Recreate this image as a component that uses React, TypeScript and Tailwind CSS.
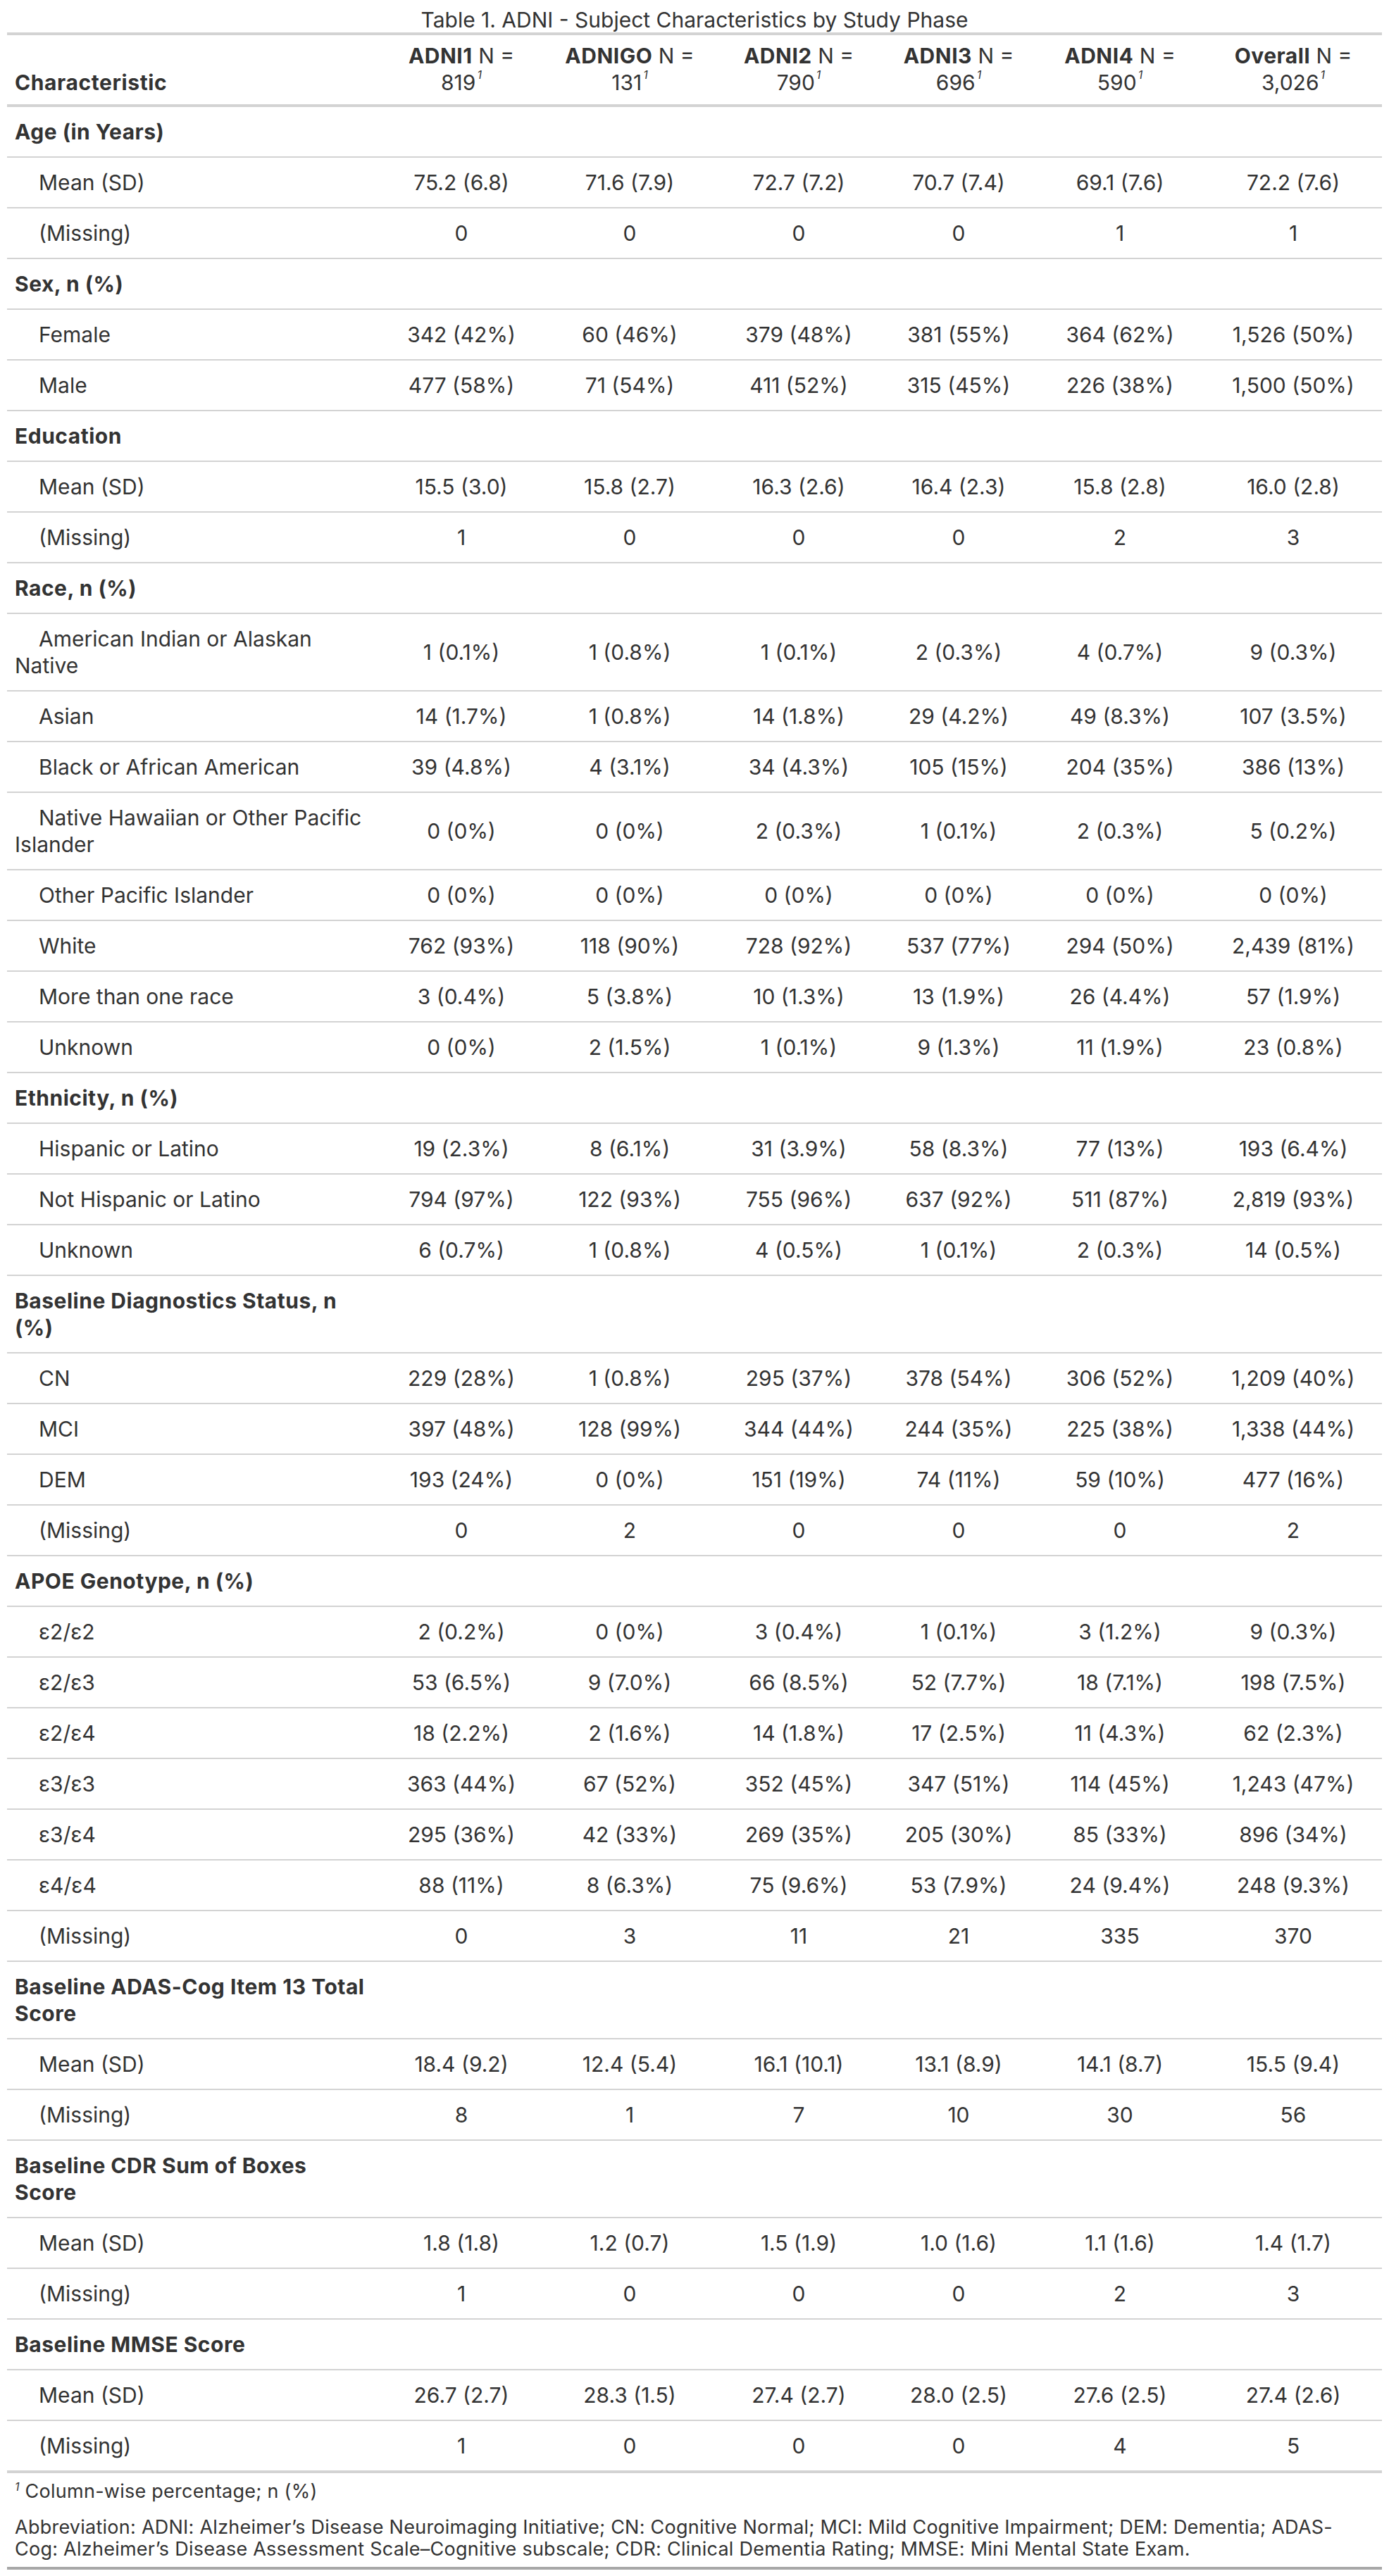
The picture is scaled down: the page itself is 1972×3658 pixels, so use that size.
import React from "react";

type Row = {
  label: React.ReactNode;
  group?: boolean;
  values?: string[];
};

const columns = [
  { name: "ADNI1", n: "819", width: "w-[234px]" },
  { name: "ADNIGO", n: "131", width: "w-[244px]" },
  { name: "ADNI2", n: "790", width: "w-[236px]" },
  { name: "ADNI3", n: "696", width: "w-[218px]" },
  { name: "ADNI4", n: "590", width: "w-[240px]" },
  { name: "Overall", n: "3,026", width: "w-[252px]" },
];

const rows: Row[] = [
  { label: "Age (in Years)", group: true },
  { label: "Mean (SD)", values: ["75.2 (6.8)", "71.6 (7.9)", "72.7 (7.2)", "70.7 (7.4)", "69.1 (7.6)", "72.2 (7.6)"] },
  { label: "(Missing)", values: ["0", "0", "0", "0", "1", "1"] },
  { label: "Sex, n (%)", group: true },
  { label: "Female", values: ["342 (42%)", "60 (46%)", "379 (48%)", "381 (55%)", "364 (62%)", "1,526 (50%)"] },
  { label: "Male", values: ["477 (58%)", "71 (54%)", "411 (52%)", "315 (45%)", "226 (38%)", "1,500 (50%)"] },
  { label: "Education", group: true },
  { label: "Mean (SD)", values: ["15.5 (3.0)", "15.8 (2.7)", "16.3 (2.6)", "16.4 (2.3)", "15.8 (2.8)", "16.0 (2.8)"] },
  { label: "(Missing)", values: ["1", "0", "0", "0", "2", "3"] },
  { label: "Race, n (%)", group: true },
  { label: "American Indian or Alaskan Native", values: ["1 (0.1%)", "1 (0.8%)", "1 (0.1%)", "2 (0.3%)", "4 (0.7%)", "9 (0.3%)"] },
  { label: "Asian", values: ["14 (1.7%)", "1 (0.8%)", "14 (1.8%)", "29 (4.2%)", "49 (8.3%)", "107 (3.5%)"] },
  { label: "Black or African American", values: ["39 (4.8%)", "4 (3.1%)", "34 (4.3%)", "105 (15%)", "204 (35%)", "386 (13%)"] },
  { label: "Native Hawaiian or Other Pacific Islander", values: ["0 (0%)", "0 (0%)", "2 (0.3%)", "1 (0.1%)", "2 (0.3%)", "5 (0.2%)"] },
  { label: "Other Pacific Islander", values: ["0 (0%)", "0 (0%)", "0 (0%)", "0 (0%)", "0 (0%)", "0 (0%)"] },
  { label: "White", values: ["762 (93%)", "118 (90%)", "728 (92%)", "537 (77%)", "294 (50%)", "2,439 (81%)"] },
  { label: "More than one race", values: ["3 (0.4%)", "5 (3.8%)", "10 (1.3%)", "13 (1.9%)", "26 (4.4%)", "57 (1.9%)"] },
  { label: "Unknown", values: ["0 (0%)", "2 (1.5%)", "1 (0.1%)", "9 (1.3%)", "11 (1.9%)", "23 (0.8%)"] },
  { label: "Ethnicity, n (%)", group: true },
  { label: "Hispanic or Latino", values: ["19 (2.3%)", "8 (6.1%)", "31 (3.9%)", "58 (8.3%)", "77 (13%)", "193 (6.4%)"] },
  { label: "Not Hispanic or Latino", values: ["794 (97%)", "122 (93%)", "755 (96%)", "637 (92%)", "511 (87%)", "2,819 (93%)"] },
  { label: "Unknown", values: ["6 (0.7%)", "1 (0.8%)", "4 (0.5%)", "1 (0.1%)", "2 (0.3%)", "14 (0.5%)"] },
  { label: <>Baseline Diagnostics Status, n<br />(%)</>, group: true },
  { label: "CN", values: ["229 (28%)", "1 (0.8%)", "295 (37%)", "378 (54%)", "306 (52%)", "1,209 (40%)"] },
  { label: "MCI", values: ["397 (48%)", "128 (99%)", "344 (44%)", "244 (35%)", "225 (38%)", "1,338 (44%)"] },
  { label: "DEM", values: ["193 (24%)", "0 (0%)", "151 (19%)", "74 (11%)", "59 (10%)", "477 (16%)"] },
  { label: "(Missing)", values: ["0", "2", "0", "0", "0", "2"] },
  { label: "APOE Genotype, n (%)", group: true },
  { label: "ε2/ε2", values: ["2 (0.2%)", "0 (0%)", "3 (0.4%)", "1 (0.1%)", "3 (1.2%)", "9 (0.3%)"] },
  { label: "ε2/ε3", values: ["53 (6.5%)", "9 (7.0%)", "66 (8.5%)", "52 (7.7%)", "18 (7.1%)", "198 (7.5%)"] },
  { label: "ε2/ε4", values: ["18 (2.2%)", "2 (1.6%)", "14 (1.8%)", "17 (2.5%)", "11 (4.3%)", "62 (2.3%)"] },
  { label: "ε3/ε3", values: ["363 (44%)", "67 (52%)", "352 (45%)", "347 (51%)", "114 (45%)", "1,243 (47%)"] },
  { label: "ε3/ε4", values: ["295 (36%)", "42 (33%)", "269 (35%)", "205 (30%)", "85 (33%)", "896 (34%)"] },
  { label: "ε4/ε4", values: ["88 (11%)", "8 (6.3%)", "75 (9.6%)", "53 (7.9%)", "24 (9.4%)", "248 (9.3%)"] },
  { label: "(Missing)", values: ["0", "3", "11", "21", "335", "370"] },
  { label: <>Baseline ADAS-Cog Item 13 Total<br />Score</>, group: true },
  { label: "Mean (SD)", values: ["18.4 (9.2)", "12.4 (5.4)", "16.1 (10.1)", "13.1 (8.9)", "14.1 (8.7)", "15.5 (9.4)"] },
  { label: "(Missing)", values: ["8", "1", "7", "10", "30", "56"] },
  { label: <>Baseline CDR Sum of Boxes<br />Score</>, group: true },
  { label: "Mean (SD)", values: ["1.8 (1.8)", "1.2 (0.7)", "1.5 (1.9)", "1.0 (1.6)", "1.1 (1.6)", "1.4 (1.7)"] },
  { label: "(Missing)", values: ["1", "0", "0", "0", "2", "3"] },
  { label: "Baseline MMSE Score", group: true },
  { label: "Mean (SD)", values: ["26.7 (2.7)", "28.3 (1.5)", "27.4 (2.7)", "28.0 (2.5)", "27.6 (2.5)", "27.4 (2.6)"] },
  { label: "(Missing)", values: ["1", "0", "0", "0", "4", "5"] },
];

const Mark = () => (
  <sup className="italic font-normal tracking-normal text-[16px] -top-[16px] ml-[2px]">1</sup>
);

export default function App() {
  return (
    <div className="bg-white px-[10px] text-[#333333] font-['Inter',sans-serif] text-[30px] leading-[38px]">
      <div className="h-[46px] pt-[9px] text-center">
        Table 1. ADNI - Subject Characteristics by Study Phase
      </div>
      <table className="table-fixed w-[1952px] border-separate border-spacing-0">
        <colgroup>
          <col className="w-[528px]" />
          {columns.map((c) => (
            <col key={c.name} className={c.width} />
          ))}
        </colgroup>
        <thead>
          <tr>
            <th className="text-left align-bottom font-bold tracking-[0.6px] px-[11px] pt-[10px] pb-[12px] border-t-4 border-b-4 border-[#D3D3D3]">
              Characteristic
            </th>
            {columns.map((c) => (
              <th
                key={c.name}
                className="text-center align-bottom font-normal px-[8px] pt-[10px] pb-[12px] border-t-4 border-b-4 border-[#D3D3D3]"
              >
                <span className="font-bold tracking-[0.5px]">{c.name}</span> N =
                <br />
                {c.n}
                <Mark />
              </th>
            ))}
          </tr>
        </thead>
        <tbody>
          {rows.map((r, i) => {
            const last = i === rows.length - 1;
            const border = last ? "" : "border-b-2 border-[#D3D3D3]";
            return (
              <tr key={i}>
                <td
                  className={`text-left align-middle px-[11px] py-4 ${border} ${
                    r.group ? "font-bold tracking-[0.5px]" : "indent-[34px]"
                  }`}
                >
                  {r.label}
                </td>
                {columns.map((c, j) => (
                  <td key={c.name} className={`text-center align-middle px-[8px] py-4 ${border}`}>
                    {r.values ? r.values[j] : ""}
                  </td>
                ))}
              </tr>
            );
          })}
        </tbody>
      </table>
      <div className="w-[1952px] border-t-4 border-b-4 border-t-[#D3D3D3] border-b-[#A8A8A8] text-[27px] leading-[31px] tracking-[0.25px]">
        <div className="px-[11px] py-[10px]">
          <sup className="italic text-[16px] -top-[10px]">1</sup> Column-wise percentage; n (%)
        </div>
        <div className="px-[11px] py-[10px]">
          Abbreviation: ADNI: Alzheimer’s Disease Neuroimaging Initiative; CN: Cognitive Normal; MCI: Mild Cognitive
          Impairment; DEM: Dementia; ADAS-
          <br />
          Cog: Alzheimer’s Disease Assessment Scale–Cognitive subscale; CDR: Clinical Dementia Rating; MMSE: Mini Mental
          State Exam.
        </div>
      </div>
    </div>
  );
}
